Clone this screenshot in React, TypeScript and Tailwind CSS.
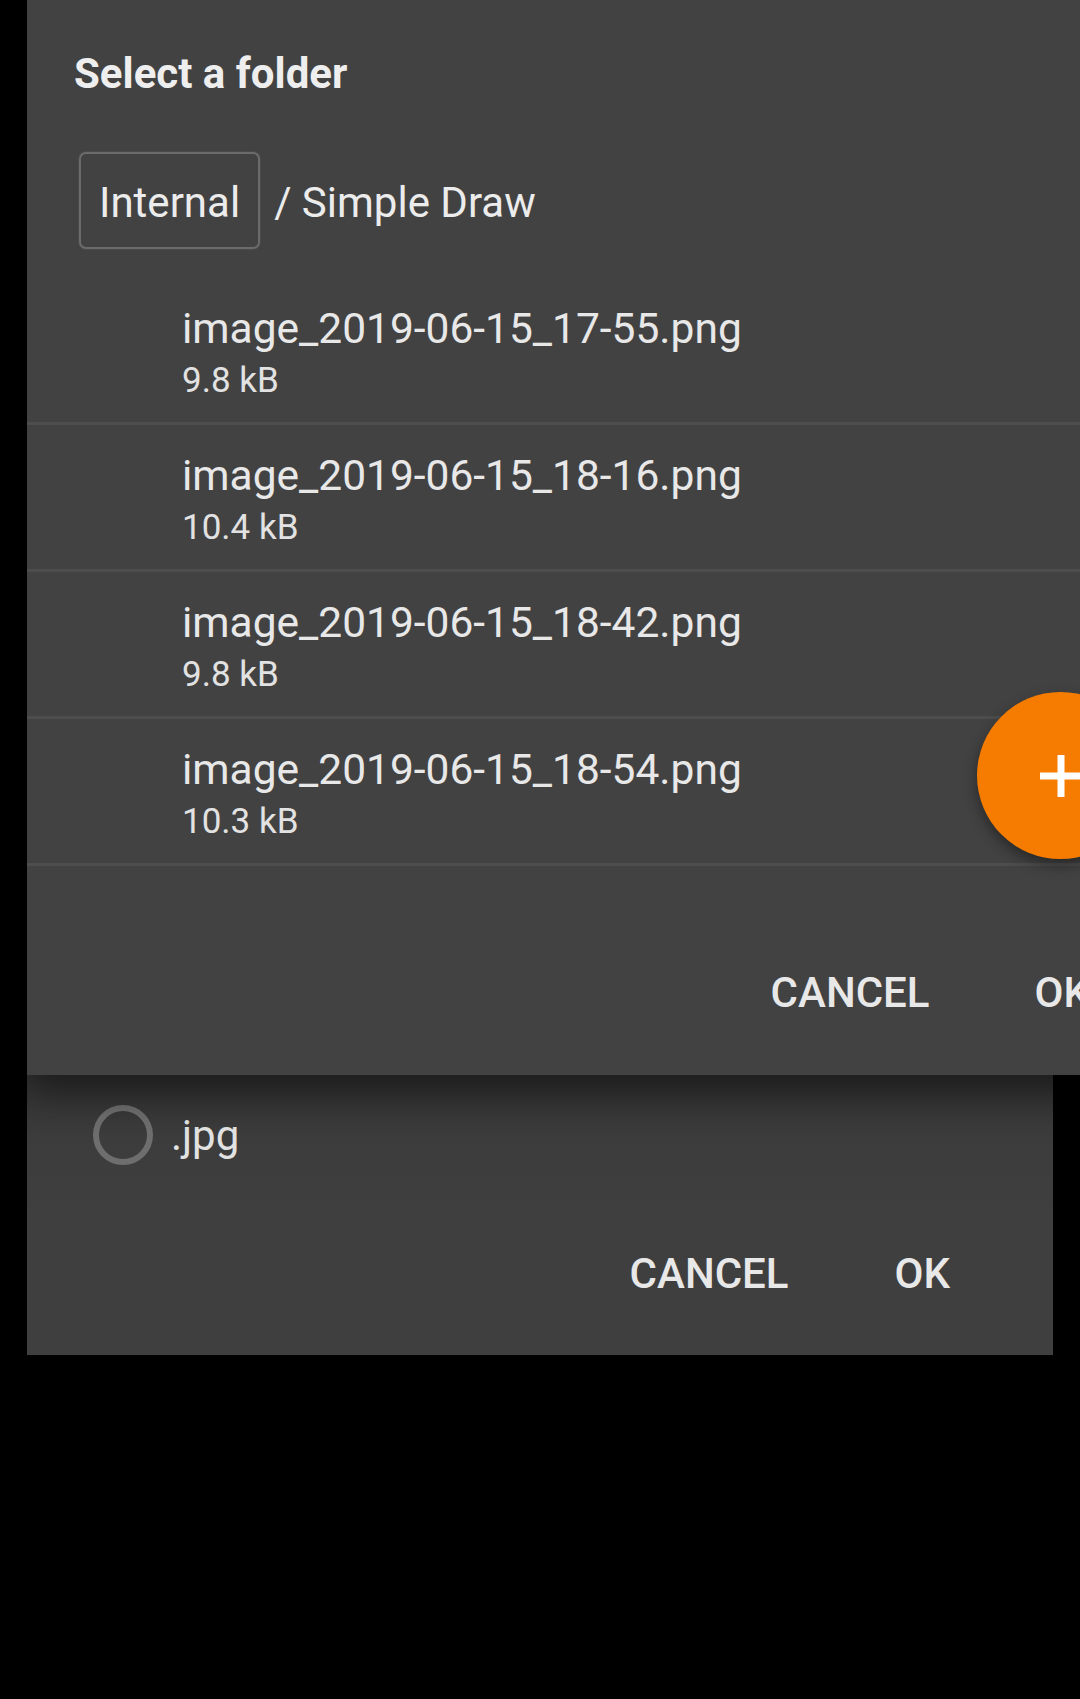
import React from 'react';

const files = [
  { name: 'image_2019-06-15_17-55.png', size: '9.8 kB' },
  { name: 'image_2019-06-15_18-16.png', size: '10.4 kB' },
  { name: 'image_2019-06-15_18-42.png', size: '9.8 kB' },
  { name: 'image_2019-06-15_18-54.png', size: '10.3 kB' },
];

const font = { fontFamily: 'Roboto, "Noto Sans", sans-serif' };

function FileRow({ name, size }: { name: string; size: string }) {
  return (
    <div className="h-[147px] border-b-[3px] border-[#4d4d4d] pl-[155px] pt-[26px]">
      <p className="text-[42.5px] leading-[49px] text-[#e8e8e8]">{name}</p>
      <p className="mt-[7px] text-[35px] leading-[41px] text-[#e2e2e2]">{size}</p>
    </div>
  );
}

export default function App() {
  return (
    <div className="w-[1080px] h-[1699px] overflow-hidden bg-black" style={font}>
      {/* folder picker dialog */}
      <div className="relative z-10 ml-[27px] w-[1166px] h-[1075px] bg-[#424242] shadow-[0_18px_36px_rgba(0,0,0,0.45)]">
        <div className="pl-[47px] pt-[49px]">
          <h1 className="text-[42px] leading-[49px] font-bold text-[#eeeeee]">Select a folder</h1>
        </div>

        <div className="flex items-center mt-[54px] pl-[52px]">
          <div className="h-[97px] border-2 border-[#6b6b6b] rounded-[7px] px-[18px] pt-[24px] shadow-[0_0_2px_rgba(120,120,120,0.6)]">
            <span className="block text-[42px] leading-[49px] text-[#ececec]">Internal</span>
          </div>
          <span className="ml-[14px] pt-[4px] text-[42px] leading-[49px] text-[#ececec]">/ Simple Draw</span>
        </div>

        <div className="mt-[29px]">
          {files.map((f) => (
            <FileRow key={f.name} name={f.name} size={f.size} />
          ))}
        </div>

        <div className="flex justify-end gap-[105px] pr-[103px] pt-[102px]">
          <span className="text-[42px] leading-[49px] font-medium text-[#e8e8e8]">CANCEL</span>
          <span className="text-[42px] leading-[49px] font-medium text-[#e8e8e8]">OK</span>
        </div>

        {/* floating add button */}
        <div className="absolute left-[950px] top-[692px] w-[167px] h-[167px] rounded-full bg-[#f57c00] shadow-[0_6px_14px_rgba(0,0,0,0.4)] flex items-center justify-center">
          <svg width="42" height="42" viewBox="0 0 42 42">
            <rect x="17.5" y="0" width="7" height="42" fill="#ffffff" />
            <rect x="0" y="17.5" width="42" height="7" fill="#ffffff" />
          </svg>
        </div>
      </div>

      {/* format dialog behind */}
      <div className="ml-[27px] w-[1026px] h-[280px] pt-[30px] bg-[linear-gradient(to_bottom,#333333_0px,#3c3c3c_60px,#3f3f3f_140px)]">
        <div className="flex items-center h-[60px] pl-[66px]">
          <div className="w-[60px] h-[60px] rounded-full border-[6px] border-[#6e6e6e]" />
          <span className="ml-[18px] text-[42px] leading-[49px] text-[#e2e2e2]">.jpg</span>
        </div>
        <div className="flex justify-end gap-[106px] pr-[103px] mt-[84px]">
          <span className="text-[42px] leading-[49px] font-medium text-[#e8e8e8]">CANCEL</span>
          <span className="text-[42px] leading-[49px] font-medium text-[#e8e8e8]">OK</span>
        </div>
      </div>
    </div>
  );
}
